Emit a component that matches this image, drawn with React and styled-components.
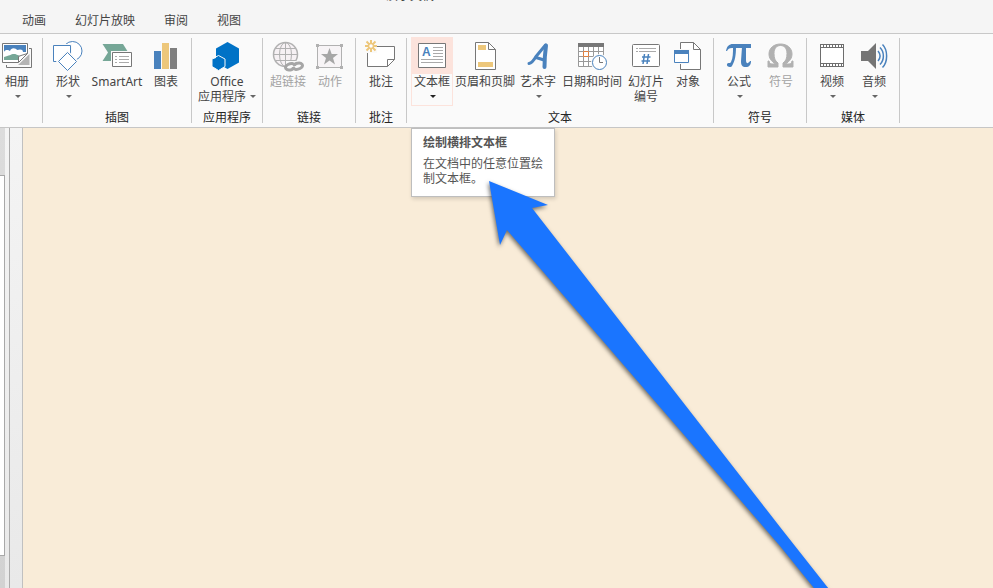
import React from "react";
import styled, { createGlobalStyle } from "styled-components";

const GREY = "#777777";
const BLUE = "#4a82bd";
const GOLD = "#edc77b";
const FADED = "#b1b1b1";

const GlobalStyle = createGlobalStyle`
  * { box-sizing: border-box; }
  body {
    margin: 0;
    overflow: hidden;
    font-family: "Noto Sans", "Noto Sans CJK SC", sans-serif;
    font-size: 12px;
    color: #444444;
  }
  button { font: inherit; color: inherit; }
`;

const Window = styled.div`
  height: 100vh;
  display: flex;
  flex-direction: column;
  overflow: hidden;
  background: #f5f5f5;
`;

const TitleBar = styled.header`
  height: 8px;
  flex: none;
  display: flex;
  align-items: flex-start;
  padding-left: 386px;
  overflow: hidden;
`;

const Title = styled.span`
  line-height: 16px;
  margin-top: -12px;
`;

const TabBar = styled.nav`
  height: 25px;
  flex: none;
  display: flex;
  gap: 29px;
  padding-left: 22px;
`;

const Tab = styled.button`
  border: 0;
  padding: 1px 0 0;
  background: none;
  line-height: 24px;
  height: 25px;
`;

const Ribbon = styled.section`
  flex: none;
  display: flex;
  height: 95px;
  overflow: hidden;
  background: #fafafa;
  border-top: 1px solid #c8c8c8;
  border-bottom: 1px solid #c6c6c6;
`;

const GroupBox = styled.div`
  flex: none;
  display: flex;
  flex-direction: column;
  padding: 3px 4px 0;
  margin-left: ${(p) => (p.$cut ? "-8px" : "0")};
`;

const GroupItems = styled.div`
  display: flex;
  height: 73px;
  align-items: flex-start;
`;

const GroupName = styled.div`
  text-align: center;
  line-height: 16px;
  color: #262626;
  height: 16px;
  white-space: nowrap;
`;

const Separator = styled.div`
  flex: none;
  width: 1px;
  margin: 4px 0;
  background: #c8c8c8;
`;

const Tool = styled.button`
  width: ${(p) => p.$width || 42}px;
  height: 69px;
  display: flex;
  flex-direction: column;
  align-items: center;
  border: 0;
  padding: 3px 0 0;
  color: ${(p) => (p.disabled ? "#a3a3a3" : "#444444")};
  background: ${(p) => (p.$active ? "linear-gradient(#fce3dc 37px, #fafafa 37px)" : "none")};
  box-shadow: ${(p) => (p.$active ? "inset 0 0 0 1px #fce3dc" : "none")};
  white-space: nowrap;
`;

const Glyph = styled.svg`
  display: block;
  flex: none;
  width: 32px;
  height: 32px;
  margin-bottom: 2px;
  overflow: visible;
`;

const Label = styled.span`
  display: flex;
  align-items: center;
  gap: 4px;
  line-height: 15px;
  height: 15px;
`;

const CaretShape = styled.svg`
  width: 6px;
  height: 3px;
  color: ${(p) => (p.$dark ? "#222222" : "#666666")};
`;

const CaretLine = styled.span`
  display: flex;
  align-items: center;
  height: 15px;
  padding-left: 2px;
`;

const Workspace = styled.main`
  position: relative;
  flex: 1;
  display: flex;
  min-height: 0;
  background: linear-gradient(#f4f4f4, #e9e9e9);
`;

const Thumbnails = styled.aside`
  width: 5px;
  flex: none;
  display: flex;
  flex-direction: column;
  padding: 47px 0 32px;
  background: linear-gradient(#dcdcdc, #d2d2d2);
`;

const Thumbnail = styled.div`
  flex: 1;
  background: #ffffff;
  border: 1px solid #a8a8a8;
  border-left: 0;
`;

const Splitter = styled.div`
  flex: none;
  width: 13px;
  margin-left: 4px;
  border-left: 1px solid #ababab;
`;

const Slide = styled.section`
  flex: 1;
  background: #f9ecd8;
  border-left: 1px solid #c0c0c0;
`;

const Tooltip = styled.div`
  position: absolute;
  left: 411px;
  top: 0;
  width: 144px;
  padding: 6px 11px 10px;
  background: #ffffff;
  border: 1px solid #bebebe;
  box-shadow: 1px 2px 4px rgba(0, 0, 0, 0.15);
  line-height: 15px;
  color: #555555;
`;

const TooltipTitle = styled.strong`
  display: block;
  margin-bottom: 6px;
`;

const Arrow = styled.svg`
  position: absolute;
  left: 480px;
  top: 46px;
  width: 360px;
  height: 420px;
  filter: drop-shadow(-1px 2px 2px rgba(0, 0, 0, 0.55));
`;

const Caret = ({ dark }) => (
  <CaretShape viewBox="0 0 6 3" $dark={dark} aria-hidden="true">
    <path d="M0 0H6L3 3Z" fill="currentColor" />
  </CaretShape>
);

const icons = {
  album: (
    <>
      <path d="M28 8.5H30.5V27.5H5.5V25" fill="none" stroke={GREY} />
      <path d="M17 25L28.500 14V25Z" fill="#b4b4b4" />
      <path d="M1.500 3.500H26.500V13L17 22.500H1.500Z" fill="#fff" stroke={GREY} />
      <path d="M3 5H25V12H3Z" fill={BLUE} />
      <path d="M3 12C4 9 8 10 9 11C10 7 15 8 16 10C19 9 22 9 22 12L18 14H3Z" fill="#fff" />
      <path d="M3 17C8 16 10 14 13 14C16 14 17 16 21 16L17 20H3Z" fill="#76a797" />
      <path d="M17.500 22.500V16.500L20 15.500L26.500 13.500Z" fill="#fff" stroke={GREY} />
    </>
  ),
  shapes: (
    <>
      <circle cx="20.5" cy="11" r="9.5" fill="#fff" stroke={BLUE} />
      <path d="M0 4H20V23H0Z" fill="#fafafa" />
      <path d="M1.500 5.500H18.500V21.500H1.500Z" fill="#fff" stroke={BLUE} />
      <path d="M15.500 10L27 21.500L15.500 33L4 21.500Z" fill="#fafafa" />
      <path d="M15.500 12.500L24.500 21.500L15.500 30.500L6.500 21.500Z" fill="#fff" stroke={BLUE} />
    </>
  ),
  smartart: (
    <>
      <path d="M1.500 4H22L27 12L22 21H1.500L7 12.500Z" fill="#76a797" />
      <path d="M10 11H32V28H10Z" fill="#fafafa" />
      <path d="M11.500 12.500H30.500V26.500H11.500Z" fill="#fff" stroke={GREY} />
      <path d="M14 16.500H16M18 16.500H28M14 19.500H16M18 19.500H28M14 22.500H16M18 22.500H28" stroke="#aaa" />
    </>
  ),
  chart: (
    <>
      <path d="M4 11H11V29H4Z" fill={BLUE} />
      <path d="M12 3H19V29H12Z" fill={GOLD} />
      <path d="M20 8H27V29H20Z" fill="#7f7f7f" />
    </>
  ),
  office: (
    <>
      <path d="M16.500 2L28 8.500V22.500L16.500 29L5 22.500V8.500Z" fill="#0072c6" />
      <path d="M7.500 15.500L14 19V26.500L7.500 30.500L1 26.500V19Z" fill="#0072c6" stroke="#fafafa" />
      <path d="M2 14H5V18L2 19Z" fill="#fafafa" />
    </>
  ),
  link: (
    <>
      <g fill="none" stroke={FADED}>
        <circle cx="13.500" cy="14.500" r="12" fill="#f6f1f4" strokeWidth="1.500" />
        <ellipse cx="13.500" cy="14.500" rx="6" ry="12" />
        <path d="M13.500 2.500V26.500M1.500 14.500H25.500M3.500 8.500H23.500M3.500 20.500H23.500" />
      </g>
      <path d="M14 21H30V32H14Z" fill="#fafafa" />
      <g fill="none" stroke="#a6a6a6" strokeWidth="3">
        <path d="M22 28L20 29.500C14 31.500 11 27 16 24.500C19 23 22 23 23 26" />
        <path d="M22 25L24 23.500C30 21.500 33 26 28 28.500C25 30 22 30 21 27" />
      </g>
    </>
  ),
  action: (
    <>
      <path d="M3.500 5.500H27.500V27.500H3.500Z" fill="#f7f4f6" stroke={FADED} />
      <path d="M2 4H5V7H2ZM26 4H29V7H26ZM2 26H5V29H2ZM26 26H29V29H26Z" fill={FADED} />
      <path d="M15.500 8L17.700 14H24L19 18L21 24.500L15.500 20.500L10 24.500L12 18L7 14H13.300Z" fill="#a6a6a6" />
    </>
  ),
  comment: (
    <>
      <path d="M2.500 6.500H29.500V19.500L22.500 26.500H2.500Z" fill="#fff" stroke={GREY} />
      <path d="M22.500 26.500V19.500H29.500" fill="none" stroke={GREY} />
      <path d="M-1 -1H12V13H-1Z" fill="#fafafa" />
      <path d="M6 0V4M6 8V12M0 6H4M8 6H12M1.500 1.500L4.500 4.500M7.500 7.500L10.500 10.500M10.500 1.500L7.500 4.500M4.500 7.500L1.500 10.500" stroke={GOLD} strokeWidth="2" />
      <circle cx="6" cy="6" r="2.500" fill="#fff" stroke={GOLD} strokeWidth="1.500" />
    </>
  ),
  textbox: (
    <>
      <path d="M2.500 3.500H29.500V27.500H2.500Z" fill="#fff" stroke={GREY} />
      <text x="6" y="16" fontSize="12" fontWeight="700" fontFamily="Liberation Sans" fill={BLUE}>A</text>
      <path d="M17 7.500H27M17 10.500H27M17 13.500H27M17 16.500H27M5 19.500H27M5 22.500H27" stroke="#aaa" />
    </>
  ),
  header: (
    <>
      <path d="M6.500 2.500H19.500L26.500 9.500V29.500H6.500Z" fill="#fff" stroke={GREY} />
      <path d="M19.500 2.500V9.500H26.500" fill="none" stroke={GREY} />
      <path d="M9 5H17V10H9ZM9 22H24V27H9Z" fill={GOLD} />
    </>
  ),
  wordart: (
    <g fill="none" stroke={BLUE} strokeWidth="4" strokeLinecap="round" strokeLinejoin="round">
      <path d="M7 23.500C10 23 12 20 14 16.500L23.500 5" strokeWidth="3" />
      <path d="M24 5.500C23 13 22.500 20 22.500 27" />
      <path d="M14 17.500L22 20" strokeWidth="3" />
    </g>
  ),
  date: (
    <>
      <path d="M2.500 4H27.500V26.500H2.500Z" fill="#fff" stroke="#999" />
      <path d="M2 3H28V7H2Z" fill={GREY} />
      <path d="M7.500 7V26M12.500 7V26M17.500 7V26M22.500 7V26M3 11.500H27M3 16.500H27M3 21.500H27" stroke="#999" />
      <path d="M7.500 11.500H12.500V16.500H7.500Z" fill="#fff" stroke="#e08040" />
      <circle cx="23.500" cy="22.500" r="8.500" fill="#fafafa" />
      <circle cx="23.500" cy="22.500" r="7" fill="#fff" stroke={BLUE} />
      <path d="M23.500 17V22.500H27" fill="none" stroke={GREY} />
    </>
  ),
  number: (
    <>
      <rect x="2.500" y="4.500" width="27" height="22" rx="1" fill="#fff" stroke={GREY} />
      <path d="M6 8.500H8M9 8.500H26M6 11.500H8M9 11.500H26" stroke="#aaa" />
      <path d="M14.500 14L13 24M18.500 14L17 24M12 17H20.500M11.500 21H20" stroke={BLUE} strokeWidth="1.5" />
    </>
  ),
  object: (
    <>
      <path d="M8.500 2.500H21.500L28.500 9.500V29.500H8.500Z" fill="#fff" stroke={GREY} />
      <path d="M21.500 2.500V9.500H28.500" fill="none" stroke={GREY} />
      <path d="M1 9H18V24H1Z" fill="#fafafa" />
      <path d="M2.500 10.500H16.500V22.500H2.500Z" fill="#fff" stroke={BLUE} />
      <path d="M2 10H17V14H2Z" fill={BLUE} />
    </>
  ),
  pi: (
    <g fill={BLUE}>
      <path d="M3 11C4 6 6 4 10 4H28V8H9C6 8 5 9 4 11Z" />
      <path d="M10 7H13C13 15 12 21 9 26C8 28 3 27 4 24C5 22 7 24 8 22C10 18 10 13 10 7Z" />
      <path d="M19 7H23V20C23 24 25 24 27 21H28C28 25 26 27 23 27C19 27 18 25 18 21Z" />
    </g>
  ),
  omega: (
    <path
      d="M3 27V21H4C4.500 23 5 24 7 24H10.500C6 21 4 18 4 14C4 8 9 4 15.500 4S27 8 27 14C27 18 25 21 20.500 24H24C26 24 26.500 23 27 21H28V27H18V23C21 21 22 18 22 13.500C22 8.500 19.500 5.500 15.500 5.500S9 8.500 9 13.500C9 18 10 21 13 23V27Z"
      fill={FADED}
      stroke={FADED}
    />
  ),
  video: (
    <>
      <path d="M4 4H28V27H4Z" fill="#6d6d6d" />
      <path d="M5 8H27V23H5Z" fill="#fff" />
      <path d="M5 6H27M5 25H27" stroke="#fff" strokeWidth="2" strokeDasharray="2 1" />
    </>
  ),
  audio: (
    <>
      <path d="M3 11H10L18 3V29L10 21H3Z" fill="#757575" />
      <g fill="none" stroke={BLUE} strokeWidth="1.500">
        <path d="M20 11C22.500 14 22.500 18 20 21" />
        <path d="M22 7.500C26.500 12 26.500 20 22 24.500" />
        <path d="M24.500 4.500C30 10 30 22 24.500 27.500" />
      </g>
    </>
  ),
};

const groups = [
  { name: "", cut: true, tools: [{ icon: "album", lines: ["相册"], menu: true }] },
  {
    name: "插图",
    tools: [
      { icon: "shapes", lines: ["形状"], menu: true },
      { icon: "smartart", lines: ["SmartArt"], width: 56 },
      { icon: "chart", lines: ["图表"] },
    ],
  },
  { name: "应用程序", tools: [{ icon: "office", lines: ["Office", "应用程序"], width: 62, menu: true }] },
  {
    name: "链接",
    tools: [
      { icon: "link", lines: ["超链接"], disabled: true },
      { icon: "action", lines: ["动作"], disabled: true },
    ],
  },
  { name: "批注", tools: [{ icon: "comment", lines: ["批注"] }] },
  {
    name: "文本",
    tools: [
      { icon: "textbox", lines: ["文本框"], menu: true, active: true },
      { icon: "header", lines: ["页眉和页脚"], width: 64 },
      { icon: "wordart", lines: ["艺术字"], menu: true },
      { icon: "date", lines: ["日期和时间"], width: 66 },
      { icon: "number", lines: ["幻灯片", "编号"] },
      { icon: "object", lines: ["对象"] },
    ],
  },
  {
    name: "符号",
    tools: [
      { icon: "pi", lines: ["公式"], menu: true },
      { icon: "omega", lines: ["符号"], disabled: true },
    ],
  },
  {
    name: "媒体",
    tools: [
      { icon: "video", lines: ["视频"], menu: true },
      { icon: "audio", lines: ["音频"], menu: true },
    ],
  },
];

function RibbonTool({ icon, lines, width, menu, active, disabled }) {
  const twoLines = lines.length > 1;
  return (
    <Tool type="button" $width={width} $active={active} disabled={disabled}>
      <Glyph viewBox="0 0 32 32" aria-hidden="true">{icons[icon]}</Glyph>
      <Label>{lines[0]}</Label>
      {twoLines && (
        <Label>
          {lines[1]}
          {menu && <Caret />}
        </Label>
      )}
      {menu && !twoLines && (
        <CaretLine>
          <Caret dark={active} />
        </CaretLine>
      )}
    </Tool>
  );
}

export default function App() {
  return (
    <Window>
      <GlobalStyle />
      <TitleBar>
        <Title>演示文稿</Title>
      </TitleBar>
      <TabBar>
        {["动画", "幻灯片放映", "审阅", "视图"].map((t) => (
          <Tab key={t} type="button">{t}</Tab>
        ))}
      </TabBar>
      <Ribbon>
        {groups.map((g) => (
          <React.Fragment key={g.tools[0].icon}>
            <GroupBox $cut={g.cut}>
              <GroupItems>
                {g.tools.map((t) => (
                  <RibbonTool key={t.icon} {...t} />
                ))}
              </GroupItems>
              <GroupName>{g.name}</GroupName>
            </GroupBox>
            <Separator />
          </React.Fragment>
        ))}
      </Ribbon>
      <Workspace>
        <Thumbnails>
          <Thumbnail />
        </Thumbnails>
        <Splitter />
        <Slide />
        <Tooltip role="tooltip">
          <TooltipTitle>绘制横排文本框</TooltipTitle>
          在文档中的任意位置绘制文本框。
        </Tooltip>
        <Arrow viewBox="0 0 360 420" aria-hidden="true">
          <path d="M9 7L68 31L52 34L300 353L356 424L342 424L300 372L27 56L20 71Z" fill="#1a75ff" />
        </Arrow>
      </Workspace>
    </Window>
  );
}
